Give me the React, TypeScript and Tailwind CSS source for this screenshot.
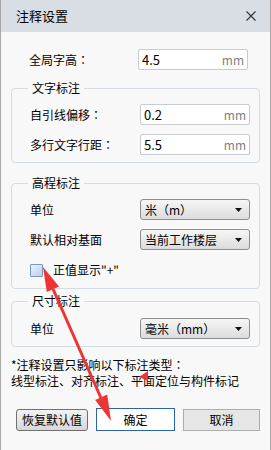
import React from "react";

const font = { fontFamily: '"Noto Sans CJK SC", "Liberation Sans", sans-serif' };
const centredPunct = { fontFamily: '"Noto Sans CJK TC", "Noto Sans CJK SC", sans-serif' };

function MmInput({ value }: { value: string }) {
  return (
    <div className="flex items-center justify-between w-[110px] h-[21px] bg-white border border-[#c8cbd0] rounded-[2px] pl-[3px] pr-[3px]">
      <span className="text-[13px] text-black leading-none">{value}</span>
      <span className="text-[12px] text-[#808080] leading-none">mm</span>
    </div>
  );
}

function Select({ value }: { value: string }) {
  return (
    <div className="flex items-center justify-between w-[110px] h-[21px] border border-[#8e8e8e] rounded-[3px] bg-gradient-to-b from-[#f6f6f6] to-[#dcdcdc] pl-[4px] pr-[7px]">
      <span style={centredPunct} className="text-[12px] text-black leading-none">{value}</span>
      <svg width="7" height="4" viewBox="0 0 7 4">
        <polygon points="0,0 7,0 3.5,4" fill="#111" />
      </svg>
    </div>
  );
}

function Row({ label, colon, children }: { label: string; colon?: boolean; children: React.ReactNode }) {
  return (
    <div className="flex items-center h-[21px]">
      <span className="w-[128px] pl-[18px] text-[12px] text-black">
        {label}
        {colon && <span style={centredPunct}>：</span>}
      </span>
      {children}
    </div>
  );
}

function Group({ title, className, children }: { title: string; className: string; children: React.ReactNode }) {
  return (
    <fieldset className={`border border-[#d6dce4] rounded-[4px] ${className}`}>
      <legend className="ml-[16px] px-[4px] text-[12px] leading-[18px] text-black">{title}</legend>
      {children}
    </fieldset>
  );
}

export default function App() {
  return (
    <div style={font} className="relative w-[271px] h-[450px] bg-[#f8f8f8] border-l border-r border-[#a8a8a8] overflow-hidden">
      {/* Title bar */}
      <div className="flex items-center justify-between h-[32px] bg-[#d9dde4] pl-[15px] pr-[14px]">
        <span className="text-[13px] text-black">注释设置</span>
        <svg width="10" height="10" viewBox="0 0 10 10">
          <path d="M0.5 0.5 L9.5 9.5 M9.5 0.5 L0.5 9.5" stroke="#333" strokeWidth="1.1" />
        </svg>
      </div>

      <div className="px-[10px]">
        <div className="mt-[17px]">
          <Row label="全局字高" colon>
            <div className="-ml-[1px]"><MmInput value="4.5" /></div>
          </Row>
        </div>

        <Group title="文字标注" className="mt-[9px] pt-[7px] pb-[7px]">
          <div className="flex flex-col gap-[9px]">
            <Row label="自引线偏移" colon><MmInput value="0.2" /></Row>
            <Row label="多行文字行距" colon><MmInput value="5.5" /></Row>
          </div>
        </Group>

        <Group title="高程标注" className="mt-[11px] pt-[7px] pb-[11px]">
          <div className="flex flex-col gap-[9px]">
            <Row label="单位"><Select value="米（m）" /></Row>
            <Row label="默认相对基面"><Select value="当前工作楼层" /></Row>
          </div>
          <div className="flex items-center mt-[13px] pl-[18px] h-[14px]">
            <span className="w-[13px] h-[13px] border border-[#7b98b8] bg-gradient-to-br from-[#e6f0fa] to-[#b9d3ee] rounded-[1px]" />
            <span className="ml-[10px] text-[12px] text-black">正值显示"+"</span>
          </div>
        </Group>

        <Group title="尺寸标注" className="mt-[3px] pt-[8px] pb-[7px]">
          <Row label="单位"><Select value="毫米（mm）" /></Row>
        </Group>

        <div className="mt-[10px] text-[12px] leading-[16px] text-black">
          <p>*注释设置只影响以下标注类型<span style={centredPunct}>：</span></p>
          <p>线型标注、对齐标注、平面定位与构件标记</p>
        </div>

        <div className="flex items-center mt-[19px] pl-[5px]">
          <button className="w-[72px] h-[22px] border border-[#707070] rounded-[3px] bg-gradient-to-b from-[#f2f2f2] to-[#d8d8d8] text-[12px] text-black">
            恢复默认值
          </button>
          <button className="ml-[8px] w-[79px] h-[23px] border border-[#2d63ab] bg-white text-[12px] text-black">
            确定
          </button>
          <button className="ml-[8px] w-[77px] h-[22px] border border-[#adadad] bg-[#e6e6e6] text-[12px] text-black">
            取消
          </button>
        </div>
      </div>

      {/* Red annotation arrows */}
      <svg className="absolute left-0 top-0 pointer-events-none" width="271" height="450" viewBox="0 0 271 450">
        <line x1="52" y1="289" x2="100" y2="398" stroke="#ee3535" strokeWidth="3" />
        <polygon points="42,267 45.8,292 58,286.5" fill="#ee3535" />
        <polygon points="110,421 94.2,400 106.2,394.6" fill="#ee3535" />
        <polygon points="138,377 147,371 147,381" fill="#ee3535" />
      </svg>
    </div>
  );
}
